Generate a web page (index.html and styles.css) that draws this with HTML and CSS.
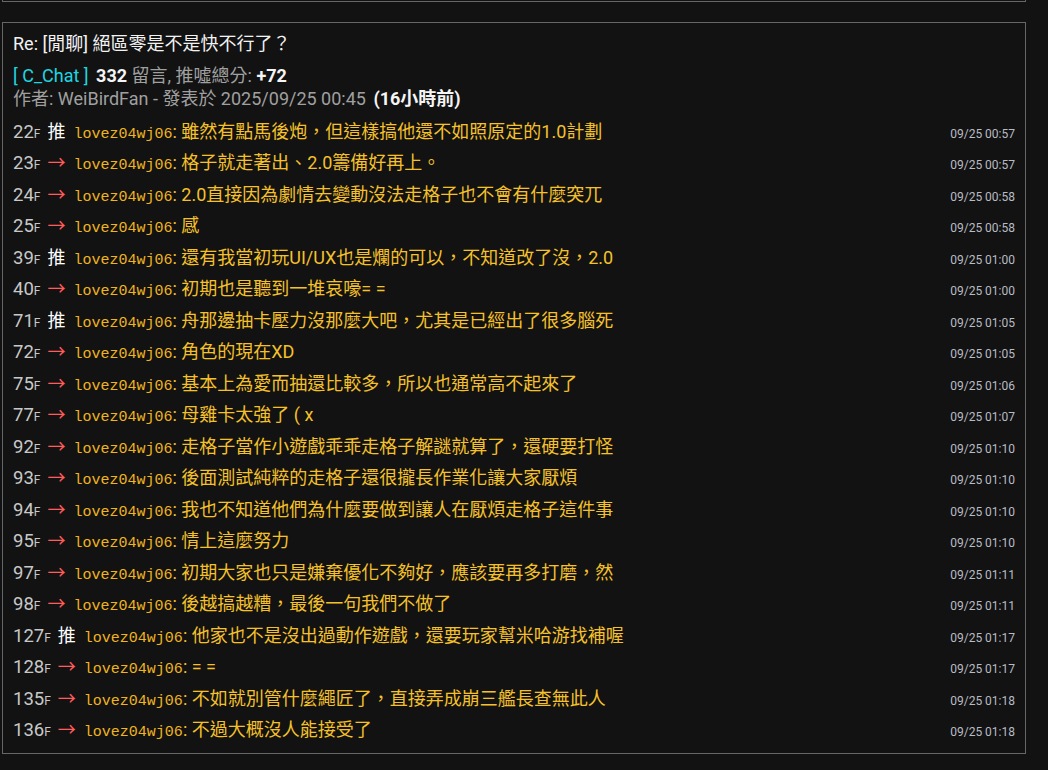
FILE: index.html
```html
<!DOCTYPE html>
<html lang="zh-Hant">
<head>
<meta charset="utf-8">
<title>Re: [閒聊] 絕區零是不是快不行了？</title>
<link rel="stylesheet" href="styles.css">
</head>
<body>
<div class="page">
  <div class="prev-box"></div>
  <div class="post">
    <div class="title">Re: [閒聊] 絕區零是不是快不行了？</div>
    <div class="meta"><span class="board">[ C_Chat ]</span> <b class="strong">332</b> 留言, 推噓總分: <b class="strong">+72</b></div>
    <div class="meta author">作者: WeiBirdFan - 發表於 2025/09/25 00:45 <b class="strong ago">(16小時前)</b></div>
    <ul class="comments">
      <li class="row"><span class="floor">22<small>F</small></span><span class="tag push">推</span><span class="user">lovez04wj06</span><span class="text">: 雖然有點馬後炮，但這樣搞他還不如照原定的1.0計劃</span><span class="time">09/25 00:57</span></li>
      <li class="row"><span class="floor">23<small>F</small></span><span class="tag arrow">→</span><span class="user">lovez04wj06</span><span class="text">: 格子就走著出、2.0籌備好再上。</span><span class="time">09/25 00:57</span></li>
      <li class="row"><span class="floor">24<small>F</small></span><span class="tag arrow">→</span><span class="user">lovez04wj06</span><span class="text">: 2.0直接因為劇情去變動沒法走格子也不會有什麼突兀</span><span class="time">09/25 00:58</span></li>
      <li class="row"><span class="floor">25<small>F</small></span><span class="tag arrow">→</span><span class="user">lovez04wj06</span><span class="text">: 感</span><span class="time">09/25 00:58</span></li>
      <li class="row"><span class="floor">39<small>F</small></span><span class="tag push">推</span><span class="user">lovez04wj06</span><span class="text">: 還有我當初玩UI/UX也是爛的可以，不知道改了沒，2.0</span><span class="time">09/25 01:00</span></li>
      <li class="row"><span class="floor">40<small>F</small></span><span class="tag arrow">→</span><span class="user">lovez04wj06</span><span class="text">: 初期也是聽到一堆哀嚎= =</span><span class="time">09/25 01:00</span></li>
      <li class="row"><span class="floor">71<small>F</small></span><span class="tag push">推</span><span class="user">lovez04wj06</span><span class="text">: 舟那邊抽卡壓力沒那麼大吧，尤其是已經出了很多腦死</span><span class="time">09/25 01:05</span></li>
      <li class="row"><span class="floor">72<small>F</small></span><span class="tag arrow">→</span><span class="user">lovez04wj06</span><span class="text">: 角色的現在XD</span><span class="time">09/25 01:05</span></li>
      <li class="row"><span class="floor">75<small>F</small></span><span class="tag arrow">→</span><span class="user">lovez04wj06</span><span class="text">: 基本上為愛而抽還比較多，所以也通常高不起來了</span><span class="time">09/25 01:06</span></li>
      <li class="row"><span class="floor">77<small>F</small></span><span class="tag arrow">→</span><span class="user">lovez04wj06</span><span class="text">: 母雞卡太強了 ( x</span><span class="time">09/25 01:07</span></li>
      <li class="row"><span class="floor">92<small>F</small></span><span class="tag arrow">→</span><span class="user">lovez04wj06</span><span class="text">: 走格子當作小遊戲乖乖走格子解謎就算了，還硬要打怪</span><span class="time">09/25 01:10</span></li>
      <li class="row"><span class="floor">93<small>F</small></span><span class="tag arrow">→</span><span class="user">lovez04wj06</span><span class="text">: 後面測試純粹的走格子還很攏長作業化讓大家厭煩</span><span class="time">09/25 01:10</span></li>
      <li class="row"><span class="floor">94<small>F</small></span><span class="tag arrow">→</span><span class="user">lovez04wj06</span><span class="text">: 我也不知道他們為什麼要做到讓人在厭煩走格子這件事</span><span class="time">09/25 01:10</span></li>
      <li class="row"><span class="floor">95<small>F</small></span><span class="tag arrow">→</span><span class="user">lovez04wj06</span><span class="text">: 情上這麼努力</span><span class="time">09/25 01:10</span></li>
      <li class="row"><span class="floor">97<small>F</small></span><span class="tag arrow">→</span><span class="user">lovez04wj06</span><span class="text">: 初期大家也只是嫌棄優化不夠好，應該要再多打磨，然</span><span class="time">09/25 01:11</span></li>
      <li class="row"><span class="floor">98<small>F</small></span><span class="tag arrow">→</span><span class="user">lovez04wj06</span><span class="text">: 後越搞越糟，最後一句我們不做了</span><span class="time">09/25 01:11</span></li>
      <li class="row"><span class="floor">127<small>F</small></span><span class="tag push">推</span><span class="user">lovez04wj06</span><span class="text">: 他家也不是沒出過動作遊戲，還要玩家幫米哈游找補喔</span><span class="time">09/25 01:17</span></li>
      <li class="row"><span class="floor">128<small>F</small></span><span class="tag arrow">→</span><span class="user">lovez04wj06</span><span class="text">: = =</span><span class="time">09/25 01:17</span></li>
      <li class="row"><span class="floor">135<small>F</small></span><span class="tag arrow">→</span><span class="user">lovez04wj06</span><span class="text">: 不如就別管什麼繩匠了，直接弄成崩三艦長查無此人</span><span class="time">09/25 01:18</span></li>
      <li class="row"><span class="floor">136<small>F</small></span><span class="tag arrow">→</span><span class="user">lovez04wj06</span><span class="text">: 不過大概沒人能接受了</span><span class="time">09/25 01:18</span></li>
    </ul>
  </div>
</div>
</body>
</html>
```

FILE: styles.css
```css
html, body {
  margin: 0;
  padding: 0;
  background: #121212;
}
body {
  font-family: Roboto, "Noto Sans CJK TC", "Noto Sans", sans-serif;
  color: #e8e8e8;
}
.page {
  padding: 0 0 0 2px;
  width: 1024px;
}
.prev-box {
  height: 1px;
  border: 1px solid #666;
  border-top: none;
}
.post {
  margin-top: 20px;
  border: 1px solid #666;
  padding: 8px 10px 7px;
  box-sizing: border-box;
  height: 732px;
}
.title {
  font-size: 18px;
  line-height: 26px;
  color: #f2f2f2;
}
.meta {
  font-size: 18px;
  line-height: 23px;
  color: #a0a0a0;
  margin-top: 6.5px;
}
.meta.author {
  margin-top: 0;
}
.board {
  color: #1fd6e0;
  margin-right: 3px;
}
.strong {
  color: #f5f5f5;
  font-weight: 700;
}
.ago {
  margin-left: 3px;
}
.comments {
  list-style: none;
  margin: 5px 0 0;
  padding: 0;
}
.row {
  display: flex;
  align-items: baseline;
  height: 31.5px;
  line-height: 31.5px;
  white-space: nowrap;
}
.floor {
  font-size: 18.5px;
  color: #c8c8c8;
}
.floor small {
  font-size: 12px;
}
.tag {
  font-family: "Noto Sans CJK TC", sans-serif;
  font-size: 18px;
  margin-left: 7px;
  margin-right: 9px;
  width: 17px;
}
.push {
  color: #ffffff;
}
.arrow {
  color: #ff5c5c;
}
.user {
  font-family: "Liberation Mono", "DejaVu Sans Mono", monospace;
  font-size: 15px;
  color: #f0b41e;
}
.text {
  font-size: 18px;
  color: #f5c12a;
}
.time {
  margin-left: auto;
  font-size: 12px;
  color: #b8bcc4;
}
```
